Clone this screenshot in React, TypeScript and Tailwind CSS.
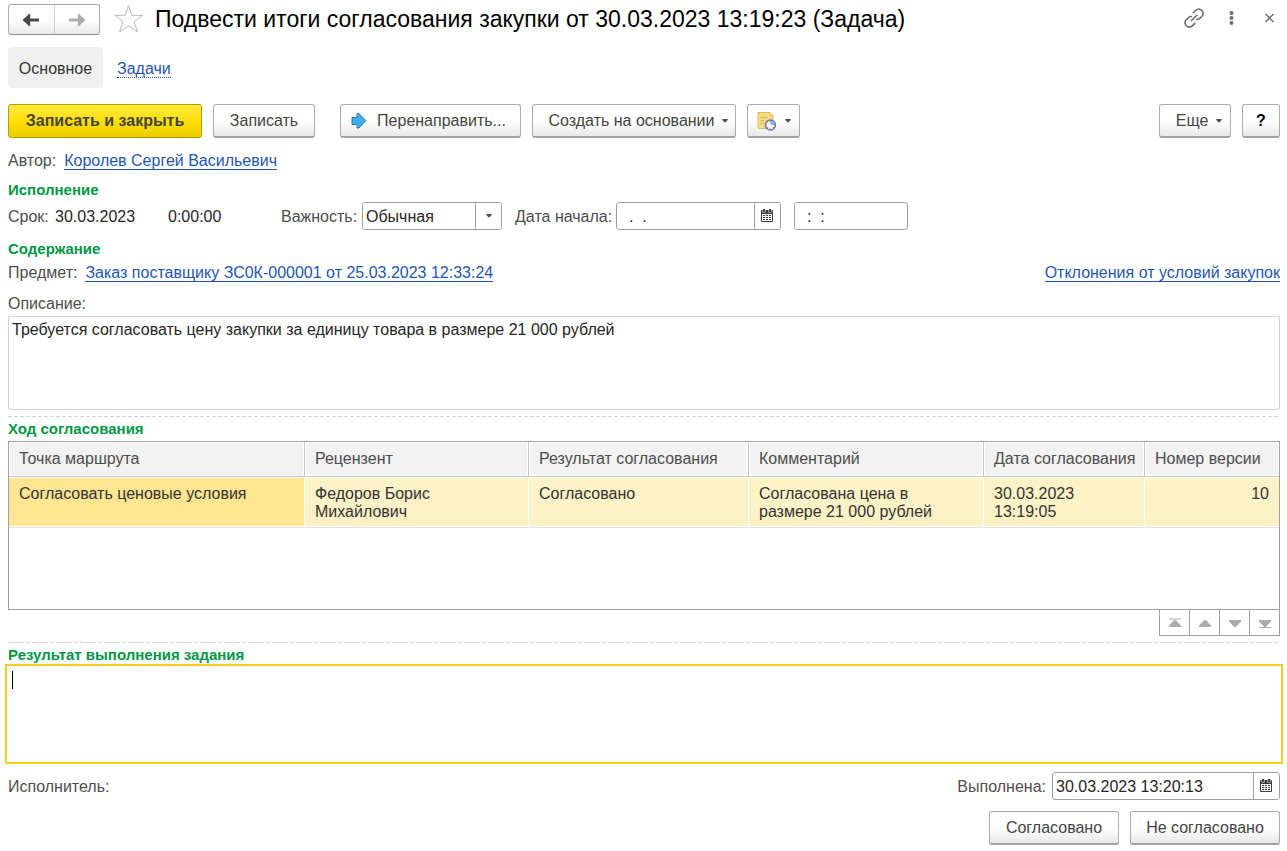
import type { ReactNode } from 'react';

const BUTTON =
  'flex h-[34px] items-center justify-center rounded-[3px] border border-[#ababab] border-b-2 border-b-[#a2a2a2] bg-linear-to-b from-white from-50% to-[#e8e8e8] text-[#444444]';
const LINK = 'inline-block border-b border-[#1f56b3] leading-4 text-[#1f56b3]';
const FIELD = 'rounded-[3px] border border-[#a0a0a0] bg-white text-[#262626]';

function Caret() {
  return (
    <svg className="h-1 w-1.5 shrink-0" viewBox="0 0 6 4" fill="#505050" aria-hidden="true">
      <path d="M0.3 0h5.4v1L3.6 3.2H2.4L0.3 1z" />
    </svg>
  );
}

function ArrowIcon({ color, flip }: { color: string; flip?: boolean }) {
  return (
    <svg className="h-3.5 w-[18px]" viewBox="0 0 18 14" fill={color} aria-hidden="true">
      <path
        d={
          flip
            ? 'M17.5 7 11 1H9.8V5.5H1V8.5H9.8V13H11z'
            : 'M0.5 7 7 1H8.2V5.5H17V8.5H8.2V13H7z'
        }
      />
    </svg>
  );
}

function CalendarIcon() {
  return (
    <svg className="mr-0.5 h-3.5 w-3" viewBox="0 0 12 14" aria-hidden="true">
      <path d="M1 1h10a1 1 0 0 1 1 1v10a1 1 0 0 1-1 1H1a1 1 0 0 1-1-1V2a1 1 0 0 1 1-1z" fill="#3d3d3d" />
      <path d="M1 5h10v7H1z" fill="#fff" />
      <path d="M2 0h2v3H2zM8 0h2v3H8z" fill="#3d3d3d" />
      <path d="M1.6 1v2.4h2.8V1M7.6 1v2.4h2.8V1" fill="none" stroke="#fff" strokeWidth=".5" />
      <path
        d="M2 6h2v1H2zM5 6h2v1H5zM8 6h2v1H8zM2 8h2v1H2zM5 8h2v1H5zM8 8h2v1H8zM2 10h2v1H2zM5 10h2v1H5zM8 10h2v1H8z"
        fill="#3d3d3d"
      />
    </svg>
  );
}

function NoteClockIcon() {
  return (
    <svg className="h-5 w-5" viewBox="0 0 20 20" aria-hidden="true">
      <path d="M1 1.5h12l3 3v13H2l-1-1z" fill="#f5dc83" stroke="#d9b95c" />
      <path d="M13 1.5v3h3z" fill="#fff3bd" stroke="#d9b95c" strokeWidth=".8" />
      <path d="M3.5 6.5h7M3.5 9.5h4M3.5 12.5h3" stroke="#d3b35a" />
      <circle cx="13.4" cy="14" r="5" fill="#fff" stroke="#5685b8" strokeWidth="1.6" />
      <path d="M13.4 14V9.8a4.2 4.2 0 0 1 4.2 4.2z" fill="#8db4dc" />
      <path d="M13.4 9.6v1M13.4 17.4v1M9.2 14h1M16.8 14h1M10.5 11l.6.6M15.8 16.4l.6.6M10.5 17l.6-.6" stroke="#e03a2e" strokeWidth="1.2" />
    </svg>
  );
}

function Heading({ children }: { children: ReactNode }) {
  return <h2 className="h-5 text-[15px] leading-5 font-bold text-[#009846]">{children}</h2>;
}

function Separator() {
  return (
    <div className="mt-1.5 mb-0.5 h-px bg-[repeating-linear-gradient(90deg,#d4d4d4_0_4px,transparent_4px_6px)]" />
  );
}

function DateField({ id, value, className }: { id: string; value: string; className: string }) {
  return (
    <div className={`flex h-7 overflow-hidden ${FIELD} ${className}`}>
      <input id={id} defaultValue={value} className="min-w-0 flex-1 px-[3px] pt-0.5 whitespace-pre outline-none" />
      <button
        type="button"
        aria-label="Выбрать дату"
        className="flex w-[26px] items-center justify-center border-l border-[#a0a0a0]"
      >
        <CalendarIcon />
      </button>
    </div>
  );
}

const MOVES = [
  { label: 'В начало', path: 'M1 0.5h12v1H1zM6.4 2h1.2L13 7.5V9H1V7.5z' },
  { label: 'Вверх', path: 'M6.4 2h1.2L13 7.5V9H1V7.5z' },
  { label: 'Вниз', path: 'M6.4 9h1.2L13 3.5V2H1v1.5z' },
  { label: 'В конец', path: 'M1 9h12v1H1zM6.4 9h1.2L13 3.5V2H1v1.5z' },
];

const COLUMNS = [
  'Точка маршрута',
  'Рецензент',
  'Результат согласования',
  'Комментарий',
  'Дата согласования',
  'Номер версии',
];

const TH =
  'h-[35px] border-r border-b border-[#c6c6c6] bg-[#f2f2f2] px-2.5 text-left font-normal whitespace-nowrap text-[#4d4d4d] shadow-[inset_0_0_0_1px_#ffffff] last:border-r-0';
const TD =
  'h-[51px] border-r border-b border-r-white border-b-[#e2e2e2] px-2.5 pt-2 align-top shadow-[inset_0_1px_0_#ffffff,inset_0_-1px_0_#ffffff] last:border-r-0';

export default function App() {
  return (
    <main className="bg-white pr-[7px] pb-1.5 pl-2 font-['Liberation_Sans',Arial,sans-serif] text-base leading-[18px] text-[#4d4d4d]">
      <header className="flex items-start pt-1">
        <div className="flex h-[31px] w-[92px] rounded-[3px] border border-[#ababab] border-b-[#8f8f8f] bg-linear-to-b from-white from-50% to-[#e8e8e8]">
          <button type="button" aria-label="Назад" className="flex flex-1 items-center justify-center border-r border-[#d0d0d0]">
            <ArrowIcon color="#4a4a4a" />
          </button>
          <button type="button" aria-label="Вперед" className="flex flex-1 items-center justify-center">
            <ArrowIcon color="#adadad" flip />
          </button>
        </div>
        <button type="button" aria-label="В избранное" className="ml-3.5">
          <svg className="h-[30px] w-[30px]" viewBox="0 0 30 30" fill="none" stroke="#b4bac0" aria-hidden="true">
            <path d="M14.5 1.5 17.9 11.4H28.6L20 17.7 23.5 28 14.5 21.8 5.5 28 9 17.7 0.8 11.4H11.1z" />
          </svg>
        </button>
        <h1 className="ml-[11px] flex-1 text-[23px] leading-[30px] text-black">
          Подвести итоги согласования закупки от 30.03.2023 13:19:23 (Задача)
        </h1>
        <div className="flex h-7 items-center pr-1">
          <button type="button" aria-label="Ссылка">
            <svg className="h-5 w-5" viewBox="0 0 20 20" fill="none" stroke="#6b6b6b" strokeWidth="1.5" aria-hidden="true">
              <path d="M8.8 5.2 11.6 2.5C13.4 0.8 16 0.8 17.7 2.4 19.4 4.1 19.4 6.7 17.7 8.5L15.8 10.4C14.7 11.4 13.5 11.8 12.1 11.5" />
              <path d="M12.2 15.8 9.4 18.5C7.6 20.2 5 20.2 3.3 18.6 1.6 16.9 1.6 14.3 3.3 12.5L5.2 10.6C6.3 9.6 7.5 9.2 8.9 9.5" transform="translate(-0.9 -0.9)" />
              <path d="M7 13l6.4-6.2" />
            </svg>
          </button>
          <button type="button" aria-label="Меню" className="ml-5">
            <svg className="h-4 w-[14px]" viewBox="0 0 14 16" fill="#6e6e6e" aria-hidden="true">
              <circle cx="7.5" cy="3" r="2" />
              <circle cx="7.5" cy="8" r="2" />
              <circle cx="7.5" cy="13" r="2" />
            </svg>
          </button>
          <button type="button" aria-label="Закрыть" className="ml-[26px]">
            <svg className="h-3 w-3" viewBox="0 0 12 12" fill="none" stroke="#6e6e6e" strokeWidth="1.5" aria-hidden="true">
              <path d="M1.5 2l8 8M9.5 2l-8 8" />
            </svg>
          </button>
        </div>
      </header>

      <nav className="mt-3 flex h-[41px] leading-[43px]">
        <a href="#main" className="w-[95px] rounded-[4px] bg-[#f0f0f0] text-center text-[#333333]">
          Основное
        </a>
        <a href="#tasks" className="ml-3.5 text-[#1f56b3]">
          <span className="inline-block border-b border-dotted border-[#1f56b3] leading-4">Задачи</span>
        </a>
      </nav>

      <div className="mt-4 flex">
        <button
          type="button"
          className="flex h-[34px] w-[194px] items-center justify-center rounded-[3px] border border-[#b39b00] bg-linear-to-b from-[#ffe838] via-[#ffe000] to-[#ecce00] font-bold text-[#444444]"
        >
          Записать и закрыть
        </button>
        <button type="button" className={`ml-[11px] w-[102px] ${BUTTON}`}>
          Записать
        </button>
        <button type="button" className={`ml-[25px] w-[181px] pr-1 ${BUTTON}`}>
          <svg className="mr-2.5 h-[18px] w-4" viewBox="0 0 16 18" fill="#3fade8" stroke="#2b7cb0" aria-hidden="true">
            <path d="M1 5.5H6V1.5H8L14.8 8.6 8 16H6V12.5H1z" strokeLinejoin="round" />
          </svg>
          Перенаправить...
        </button>
        <button type="button" className={`ml-[11px] w-[204px] gap-[7px] pl-2 ${BUTTON}`}>
          Создать на основании
          <Caret />
        </button>
        <button type="button" aria-label="Напоминание" className={`ml-[11px] w-[53px] gap-2 ${BUTTON}`}>
          <NoteClockIcon />
          <Caret />
        </button>
        <button type="button" className={`ml-auto w-[72px] gap-2 pl-2 ${BUTTON}`}>
          Еще
          <Caret />
        </button>
        <button type="button" aria-label="Справка" className={`ml-[11px] w-[38px] ${BUTTON}`}>
          <span className="font-bold text-black">?</span>
        </button>
      </div>

      <div className="mt-[11px] flex h-6 items-center gap-2">
        <span>Автор:</span>
        <a href="#author" className={LINK}>
          Королев Сергей Васильевич
        </a>
      </div>

      <section className="mt-[7px]">
        <Heading>Исполнение</Heading>
        <div className="mt-0.5 flex h-7 leading-[30px]">
          <span className="w-[47px]">Срок:</span>
          <span className="w-[113px] text-[#262626]">30.03.2023</span>
          <span className="w-[113px] text-[#262626]">0:00:00</span>
          <label htmlFor="priority" className="w-[81px]">
            Важность:
          </label>
          <div className="relative h-7 w-[140px]">
            <select id="priority" className={`h-7 w-full appearance-none px-[3px] pt-0.5 leading-6 outline-none ${FIELD}`}>
              <option>Обычная</option>
            </select>
            <span className="pointer-events-none absolute inset-y-0 right-0 flex w-[27px] items-center justify-center border-l border-[#a0a0a0]">
              <Caret />
            </span>
          </div>
          <label htmlFor="start" className="ml-[13px] w-[101px]">
            Дата начала:
          </label>
          <DateField id="start" value="  .  ." className="w-[165px]" />
          <input
            aria-label="Время начала"
            defaultValue="  :  :"
            className={`ml-[13px] h-7 w-[114px] px-[3px] pt-0.5 whitespace-pre outline-none ${FIELD}`}
          />
        </div>
      </section>

      <section className="mt-[9px]">
        <Heading>Содержание</Heading>
        <div className="mt-0.5 flex h-6 items-center gap-2">
          <span>Предмет:</span>
          <a href="#order" className={LINK}>
            Заказ поставщику ЗС0К-000001 от 25.03.2023 12:33:24
          </a>
          <a href="#deviations" className={`ml-auto ${LINK}`}>
            Отклонения от условий закупок
          </a>
        </div>
        <label htmlFor="description" className="mt-[7px] flex h-6 items-center">
          Описание:
        </label>
        <textarea
          id="description"
          className="block h-[94px] w-full resize-none rounded-[2px] border border-[#d0d0d0] px-[3px] py-1 text-[#262626] outline-none"
          defaultValue="Требуется согласовать цену закупки за единицу товара в размере 21 000 рублей"
        />
      </section>

      <Separator />

      <section>
        <Heading>Ход согласования</Heading>
        <div className="mt-0.5 h-[169px] border border-[#a0a0a0]">
          <table className="w-full table-fixed border-separate border-spacing-0">
            <colgroup>
              <col />
              <col className="w-[224px]" />
              <col className="w-[220px]" />
              <col className="w-[235px]" />
              <col className="w-[161px]" />
              <col className="w-[134px]" />
            </colgroup>
            <thead>
              <tr>
                {COLUMNS.map((name) => (
                  <th key={name} className={TH}>
                    {name}
                  </th>
                ))}
              </tr>
            </thead>
            <tbody className="text-[#333333]">
              <tr className="bg-[#fdf1c6]">
                <td className={`bg-[#fee591] ${TD}`}>Согласовать ценовые условия</td>
                <td className={TD}>
                  Федоров Борис
                  <br />
                  Михайлович
                </td>
                <td className={TD}>Согласовано</td>
                <td className={TD}>Согласована цена в размере 21 000 рублей</td>
                <td className={TD}>30.03.2023 13:19:05</td>
                <td className={`text-right ${TD}`}>10</td>
              </tr>
            </tbody>
          </table>
        </div>
        <div className="-mt-px flex justify-end">
          <div className="flex h-[27px] divide-x divide-[#a0a0a0] border border-[#a0a0a0]">
            {MOVES.map((move) => (
              <button
                key={move.label}
                type="button"
                aria-label={move.label}
                className="box-content flex w-[29px] items-center justify-center"
              >
                <svg className="h-2.5 w-3.5" viewBox="0 0 14 10" fill="#ababab" aria-hidden="true">
                  <path d={move.path} />
                </svg>
              </button>
            ))}
          </div>
        </div>
      </section>

      <Separator />

      <section>
        <Heading>Результат выполнения задания</Heading>
        <div className="relative -mx-[3px] -mt-px">
          <textarea
            aria-label="Результат выполнения задания"
            className="block h-[100px] w-full resize-none border-2 border-[#fbcb1e] p-1 caret-transparent outline-none"
          />
          <span className="absolute top-[7px] left-[7px] h-[18px] w-px bg-black" />
        </div>
      </section>

      <div className="mt-2 flex h-7 leading-[30px]">
        <span>Исполнитель:</span>
        <label htmlFor="done" className="mr-1.5 ml-auto">
          Выполнена:
        </label>
        <DateField id="done" value="30.03.2023 13:20:13" className="w-[228px]" />
      </div>

      <div className="mt-[11px] flex justify-end gap-[11px]">
        <button type="button" className={`w-[130px] ${BUTTON}`}>
          Согласовано
        </button>
        <button type="button" className={`w-[150px] ${BUTTON}`}>
          Не согласовано
        </button>
      </div>
    </main>
  );
}
